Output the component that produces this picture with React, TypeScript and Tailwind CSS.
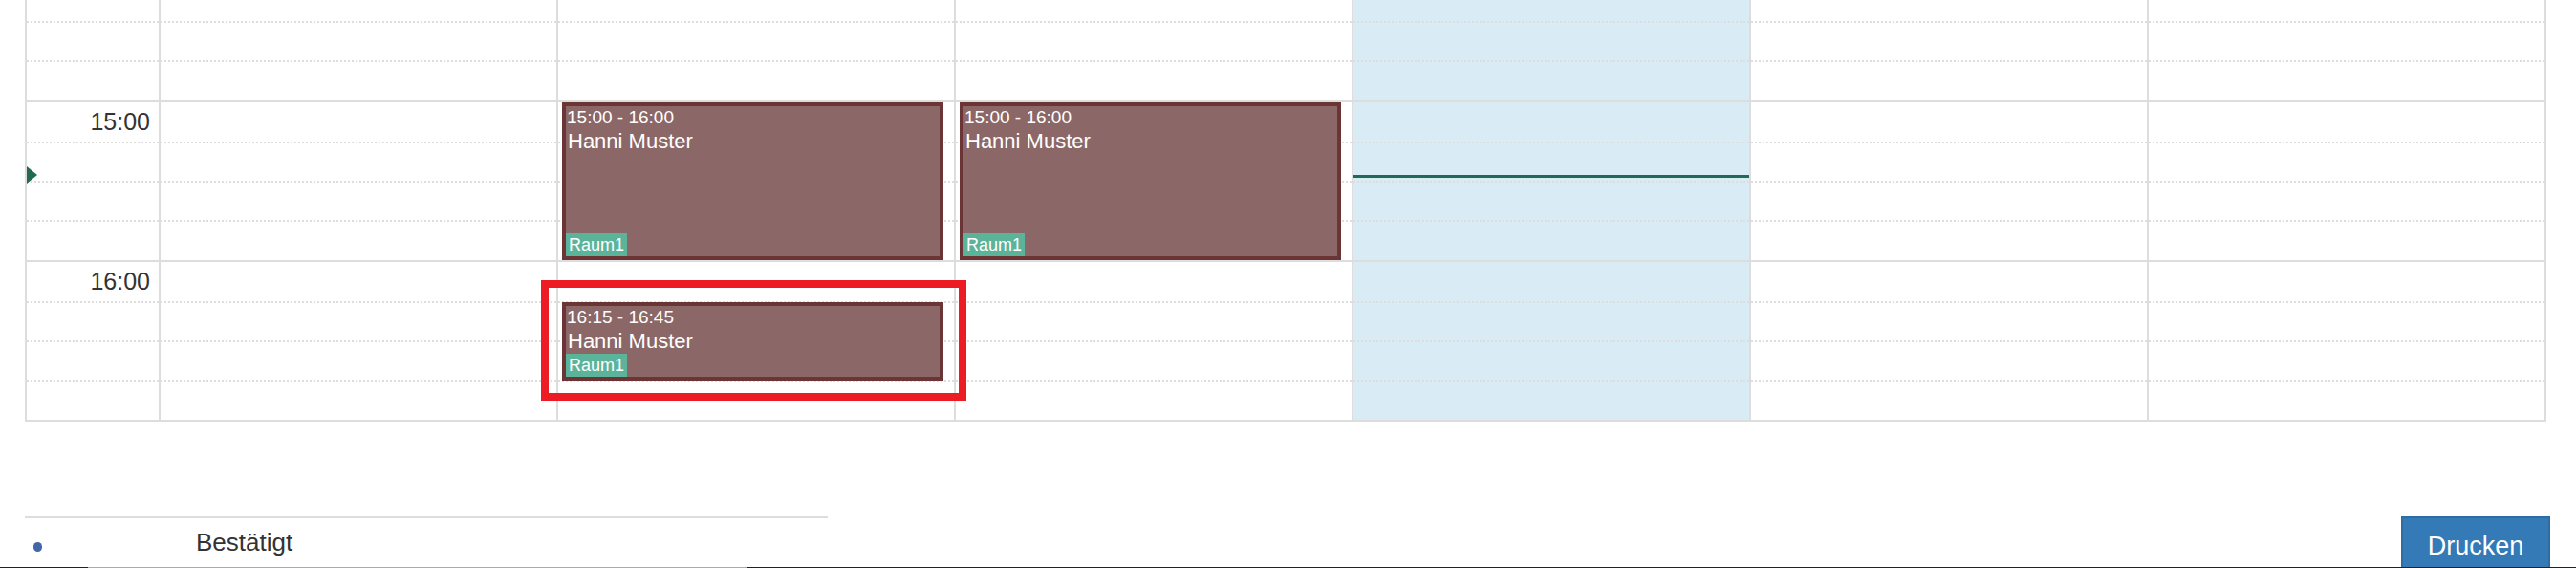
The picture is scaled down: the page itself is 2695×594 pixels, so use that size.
import React from "react";

type Slot = { h: string; kind: "none" | "dotted" | "solid" };

const slots: Slot[] = [
  { h: "h-[22px]", kind: "none" },
  { h: "h-[41px]", kind: "dotted" },
  { h: "h-[42px]", kind: "dotted" },
  { h: "h-[43px]", kind: "solid" },
  { h: "h-[41px]", kind: "dotted" },
  { h: "h-[41px]", kind: "dotted" },
  { h: "h-[42px]", kind: "dotted" },
  { h: "h-[43px]", kind: "solid" },
  { h: "h-[41px]", kind: "dotted" },
  { h: "h-[41px]", kind: "dotted" },
  { h: "h-[42px]", kind: "dotted" },
];

const borderClass = (k: Slot["kind"]) =>
  k === "solid"
    ? "border-t-2 border-solid border-[#dddddd]"
    : k === "dotted"
    ? "border-t-2 border-dotted border-[#dddddd]"
    : "";

const labels: Record<number, string> = { 3: "15:00", 7: "16:00" };

function SlotCells({ withLabels }: { withLabels?: boolean }) {
  return (
    <>
      {slots.map((s, i) => (
        <div key={i} className={`${s.h} ${borderClass(s.kind)} w-full`}>
          {withLabels && labels[i] ? (
            <div className="text-right pr-[9px] pt-[6px] text-[25px] leading-[29px] text-[#333333]">
              {labels[i]}
            </div>
          ) : null}
        </div>
      ))}
    </>
  );
}

function EventBox({
  top,
  height,
  time,
}: {
  top: string;
  height: string;
  time: string;
}) {
  return (
    <div
      className={`absolute left-[4px] right-[11px] ${top} ${height} border-4 border-[#6b3535] bg-[#8c6767] flex flex-col text-white overflow-hidden`}
    >
      <div className="pl-[1px] pt-[1px] text-[19px] leading-[21px]">{time}</div>
      <div className="pl-[2px] mt-[2px] text-[22px] leading-[26px]">Hanni Muster</div>
      <div className="mt-auto self-start bg-[#5bb39a] px-[3px] text-[18px] leading-[24px]">
        Raum1
      </div>
    </div>
  );
}

export default function App() {
  const font = { fontFamily: '"Liberation Sans", Arial, sans-serif' };
  return (
    <div
      className="relative h-[594px] w-[2695px] overflow-hidden bg-white flex flex-col"
      style={font}
    >
      {/* calendar grid */}
      <div className="ml-[26px] w-[2638px] border-x-2 border-b-2 border-[#dddddd] flex">
        {/* time column */}
        <div className="relative w-[138px] flex flex-col">
          <SlotCells withLabels />
          <div className="absolute left-0 top-[174px] w-0 h-0 border-y-[9.5px] border-y-transparent border-l-[11px] border-l-[#226a55]" />
        </div>
        {/* day columns */}
        {[0, 1, 2, 3, 4, 5].map((d) => (
          <div
            key={d}
            className={`relative w-[416px] border-l-2 border-[#dddddd] flex flex-col ${
              d === 3 ? "bg-[#d9ecf5]" : ""
            }`}
          >
            <SlotCells />
            {(d === 1 || d === 2) && (
              <EventBox top="top-[107px]" height="h-[165px]" time="15:00 - 16:00" />
            )}
            {d === 1 && (
              <EventBox top="top-[316px]" height="h-[82px]" time="16:15 - 16:45" />
            )}
            {d === 3 && (
              <div className="absolute left-0 right-0 top-[183px] h-[3px] bg-[#226a55]" />
            )}
          </div>
        ))}
      </div>

      {/* footer */}
      <div className="mt-[99px] h-[53px] overflow-hidden flex justify-between items-start pl-[26px] pr-[27px]">
        <div className="w-[840px] border-t-2 border-[#dddddd] flex items-start h-full">
          <div className="w-[179px] pl-[9px] pt-[25px]">
            <div className="w-[9px] h-[10px] rounded-full bg-[#4465a8]" />
          </div>
          <div className="pt-[10px] text-[26px] leading-[30px] text-[#333333]">Bestätigt</div>
        </div>
        <div className="w-[156px] h-[60px] bg-[#337ab7] border-2 border-[#2e6da4] text-white text-[27px] leading-[38px] pt-[10px] text-center">
          Drucken
        </div>
      </div>
      <div className="h-[1px] flex">
        <div className="w-[92px] bg-[#222222]" />
        <div className="w-[689px] bg-[#aaaaaa]" />
        <div className="flex-1 bg-[#222222]" />
      </div>

      {/* highlight annotation */}
      <div className="absolute left-[566px] top-[293px] w-[445px] h-[126px] border-8 border-[#ed1c24]" />
    </div>
  );
}
